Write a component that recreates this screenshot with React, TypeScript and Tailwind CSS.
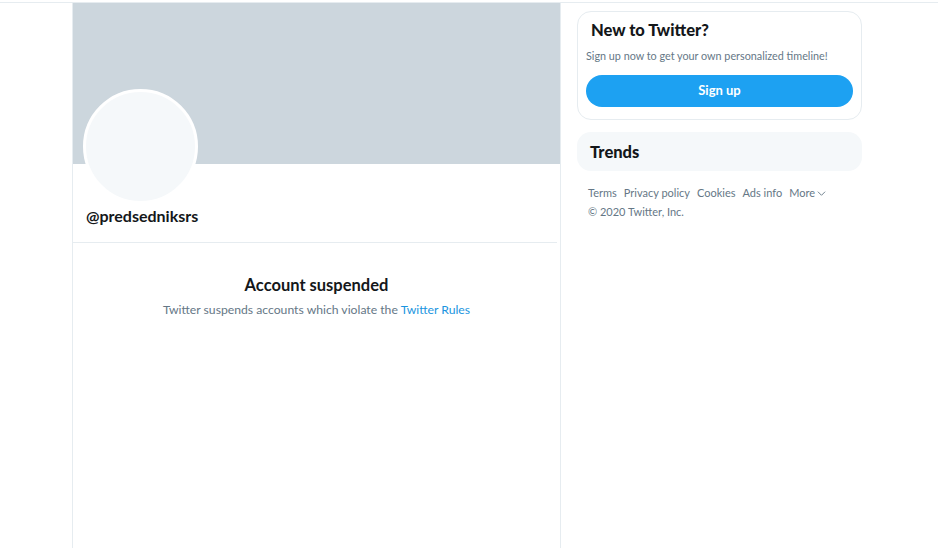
import React from 'react';

const footerLinks = ['Terms', 'Privacy policy', 'Cookies', 'Ads info'];

const ProfileColumn: React.FC = () => {
    return (
        <div className="w-[489px] ml-[72px] border-x border-[#e6ecf0] min-h-[545px] flex flex-col">
            {/* === Banner + avatar === */}
            <div className="h-[161px] bg-[#ccd6dd]" />
            <div className="px-[10px] h-[78px] relative">
                <div className="absolute left-[10px] top-[-75px] w-[115px] h-[115px] rounded-full bg-[#f5f8fa] border-[3px] border-white" />
                <div className="pt-[42px] pl-[3px] text-[16px] font-bold text-[#14171a] leading-5">@predsedniksrs</div>
            </div>
            <div className="border-b border-[#e6ecf0] mr-[3px]" />

            {/* === Suspended message === */}
            <div className="flex flex-col items-center pt-[32px]">
                <h2 className="text-[16.5px] font-bold text-[#14171a] leading-5">Account suspended</h2>
                <p className="mt-[7px] text-[12.2px] text-[#657786] leading-4">
                    Twitter suspends accounts which violate the{' '}
                    <a href="#" className="text-[#1b95e0]">Twitter Rules</a>
                </p>
            </div>
        </div>
    );
};

const Sidebar: React.FC = () => {
    return (
        <div className="w-[285px] ml-[16px] pt-[8px] flex flex-col">
            <div className="border border-[#e6ecf0] rounded-[14px] px-[8px] pt-[8px] pb-[12px]">
                <h3 className="pl-[5px] text-[16.5px] font-black text-[#14171a] leading-5">New to Twitter?</h3>
                <p className="mt-[8px] text-[10.8px] text-[#657786] leading-4">Sign up now to get your own personalized timeline!</p>
                <button className="mt-[11px] w-full h-[32px] rounded-full bg-[#1da1f2] text-white text-[13px] font-bold">
                    Sign up
                </button>
            </div>

            <div className="mt-[12px] h-[39px] rounded-[14px] bg-[#f5f8fa] px-[13px] flex items-center">
                <h3 className="text-[16.5px] font-black text-[#14171a] leading-5">Trends</h3>
            </div>

            <div className="mt-[14px] px-[11px] text-[11px] text-[#657786] leading-4">
                <div className="flex items-center gap-[7px]">
                    {footerLinks.map((link) => (
                        <span key={link}>{link}</span>
                    ))}
                    <span className="flex items-center gap-[2px]">
                        More
                        <svg width="9" height="9" viewBox="0 0 10 10" fill="none" stroke="#657786" strokeWidth="1">
                            <path d="M1 3l4 4 4-4" />
                        </svg>
                    </span>
                </div>
                <div className="mt-[3px]">© 2020 Twitter, Inc.</div>
            </div>
        </div>
    );
};

export default function App() {
    return (
        <div className="w-[938px] h-[548px] overflow-hidden bg-white font-['Lato',sans-serif]">
            <div className="mt-[2px] border-t border-[#e6ecf0]" />
            <div className="flex">
                <ProfileColumn />
                <Sidebar />
            </div>
        </div>
    );
}
